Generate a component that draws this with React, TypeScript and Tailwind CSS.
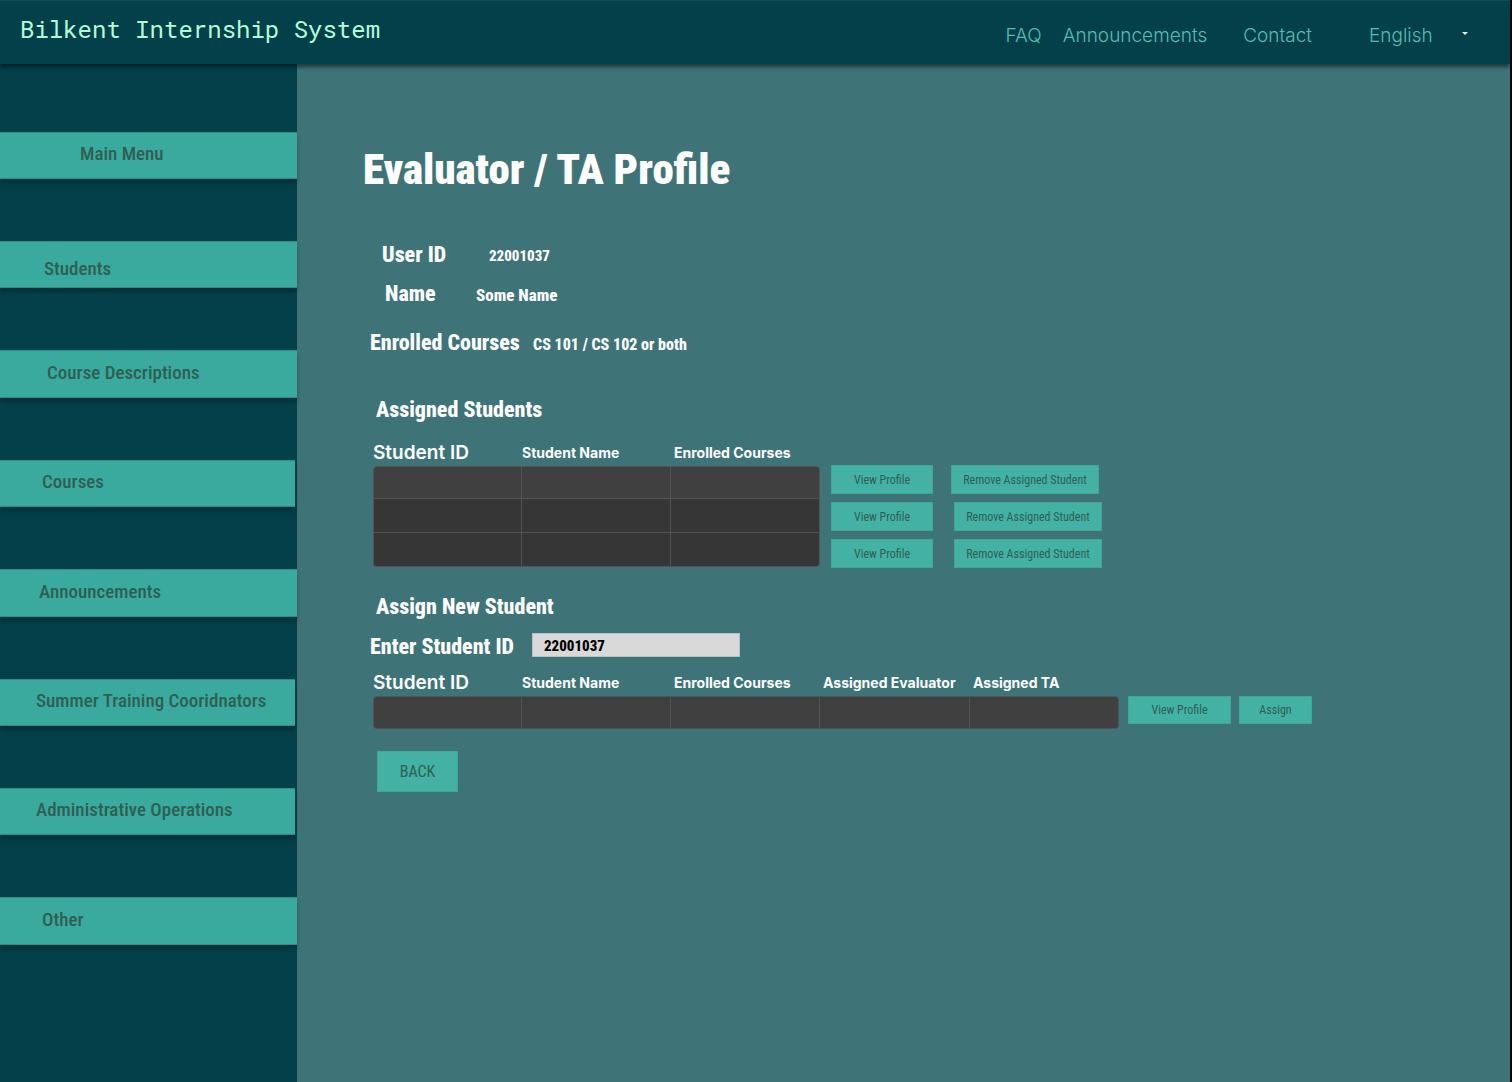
import type { ReactNode } from "react";

const display = "font-['Roboto_Condensed','Roboto',sans-serif]";

type MenuItem = { label: string; item: string };

const menu: MenuItem[] = [
  { label: "Main Menu", item: "h-[47px] w-full pl-20 pb-0.5" },
  { label: "Students", item: "h-[47px] w-full pl-11 pt-2.5" },
  { label: "Course Descriptions", item: "h-12 w-full pl-[47px] pb-0.5" },
  { label: "Courses", item: "h-[47px] mr-0.5 pl-[42px] pb-0.5" },
  { label: "Announcements", item: "h-12 w-full pl-[39px] pb-0.5" },
  { label: "Summer Training Cooridnators", item: "h-[47px] mr-0.5 pl-9 pb-0.5" },
  { label: "Administrative Operations", item: "h-[47px] mr-0.5 pl-9 pb-0.5" },
  { label: "Other", item: "h-12 w-full pl-[42px] pb-0.5" },
];

function Action({ children, className }: { children: ReactNode; className: string }) {
  return (
    <button
      type="button"
      className={`${display} shrink-0 whitespace-nowrap border border-[#3fa698] bg-[#43b1a3] text-[#2f5f53] ${className}`}
    >
      {children}
    </button>
  );
}

type Column = { label: string; head: string };

const baseColumns: Column[] = [
  { label: "Student ID", head: "w-[149px] text-[19px] font-semibold" },
  { label: "Student Name", head: "w-[149px] text-sm font-bold" },
  { label: "Enrolled Courses", head: "w-[149px] text-sm font-bold pl-[3px]" },
];

const assignColumns: Column[] = [
  ...baseColumns,
  { label: "Assigned Evaluator", head: "w-[150px] text-sm font-bold pl-[3px]" },
  { label: "Assigned TA", head: "w-[149px] text-sm font-bold pl-[3px]" },
];

function StudentTable({ columns, rows, label }: { columns: Column[]; rows: number; label: string }) {
  return (
    <table aria-label={label} className="table-fixed border-separate border-spacing-0 text-left">
      <thead>
        <tr>
          {columns.map((c) => (
            <th key={c.label} scope="col" className={`h-7 whitespace-nowrap p-0 pt-0.5 align-middle leading-6 ${c.head}`}>
              {c.label}
            </th>
          ))}
        </tr>
      </thead>
      <tbody className="[&>tr+tr>td]:h-[34px] [&>tr:first-child>td]:border-t [&>tr:first-child>td]:bg-[#404040] [&>tr:first-child>td:first-child]:rounded-tl [&>tr:first-child>td:last-child]:rounded-tr [&>tr:last-child>td:first-child]:rounded-bl [&>tr:last-child>td:last-child]:rounded-br">
        {Array.from({ length: rows }, (_, r) => (
          <tr key={r}>
            {columns.map((c) => (
              <td
                key={c.label}
                className="h-[33px] border-b border-r border-[#535353] bg-[#363636] p-0 first:border-l"
              />
            ))}
          </tr>
        ))}
      </tbody>
    </table>
  );
}

export default function App() {
  return (
    <div className="flex min-h-screen flex-col border-r-2 border-black bg-[#3e7478] font-['Inter',sans-serif] text-white">
      <header className="relative z-10 flex h-16 items-center justify-between border-t border-[#0c4c56] bg-[#04404a] pl-5 shadow-[0_3px_4px_rgba(0,0,0,0.5)]">
        <p className="whitespace-nowrap pb-2 font-['Roboto_Mono',monospace] text-2xl text-[#b1fcd6]">
          Bilkent Internship System
        </p>
        <nav className="flex items-center pr-[42px] pt-2 text-[19px] font-light text-[#57bdb0]">
          <a href="#faq" className="mr-[21px]">FAQ</a>
          <a href="#announcements" className="mr-9">Announcements</a>
          <a href="#contact" className="mr-[57px]">Contact</a>
          <div className="flex items-center">
            <select aria-label="Language" className="w-[93px] appearance-none bg-transparent">
              <option>English</option>
            </select>
            <svg aria-hidden="true" viewBox="0 0 6 3" className="mb-1.5 h-[3px] w-1.5 fill-[#e6f0f0]">
              <path d="M0 0h6L3 3z" />
            </svg>
          </div>
        </nav>
      </header>

      <div className="flex flex-1">
        <aside className="w-[297px] shrink-0 bg-[#04404a]">
          <nav className="flex flex-col gap-[62px] pb-16 pt-[68px]">
            {menu.map((m) => (
              <a
                key={m.label}
                href="#menu"
                className={`${display} flex items-center whitespace-nowrap border-y border-[#2c8d84] bg-[#3aaa9e] text-[19px] font-medium text-[#2f5f53] shadow-[0_4px_4px_rgba(0,0,0,0.25)] ${m.item}`}
              >
                {m.label}
              </a>
            ))}
          </nav>
        </aside>

        <main className="min-w-0 flex-1 pl-[76px] pt-[75px]">
          <h1 className={`${display} -ml-2.5 text-[43px] font-black leading-[60px]`}>Evaluator / TA Profile</h1>

          <dl className={`${display} whitespace-nowrap pt-9 font-extrabold`}>
            <div className="flex h-[39px] items-center">
              <dt className="w-[116px] pl-[9px] text-[22px]">User ID</dt>
              <dd className="pt-1 text-[15px]">22001037</dd>
            </div>
            <div className="flex h-[39px] items-center">
              <dt className="w-[103px] pl-3 text-[22px]">Name</dt>
              <dd className="pt-1 text-[17px]">Some Name</dd>
            </div>
            <div className="mt-2.5 flex h-[39px] items-center">
              <dt className="-ml-[3px] w-[163px] text-[22px]">Enrolled Courses</dt>
              <dd className="pt-1 text-base">CS 101 / CS 102 or both</dd>
            </div>
          </dl>

          <section className="pt-7">
            <h2 className={`${display} pl-[3px] text-[22px] font-extrabold leading-10`}>Assigned Students</h2>
            <div className="flex items-start pt-2">
              <StudentTable columns={baseColumns} rows={3} label="Assigned Students" />
              <div className="flex flex-col gap-2 pl-[11px] pt-[27px]">
                <div className="flex gap-[18px]">
                  <Action className="h-[29px] w-[102px] text-xs">View Profile</Action>
                  <Action className="h-[29px] w-[148px] text-xs">Remove Assigned Student</Action>
                </div>
                <div className="flex gap-[21px]">
                  <Action className="h-[29px] w-[102px] text-xs">View Profile</Action>
                  <Action className="h-[29px] w-[148px] text-xs">Remove Assigned Student</Action>
                </div>
                <div className="flex gap-[21px]">
                  <Action className="h-[29px] w-[102px] text-xs">View Profile</Action>
                  <Action className="h-[29px] w-[148px] text-xs">Remove Assigned Student</Action>
                </div>
              </div>
            </div>
          </section>

          <section className="pt-[19px]">
            <h2 className={`${display} pl-[3px] text-[22px] font-extrabold leading-10`}>Assign New Student</h2>
            <div className="flex h-9 items-center">
              <label
                htmlFor="student-id"
                className={`${display} -ml-[3px] w-[162px] whitespace-nowrap pt-0.5 text-[22px] font-extrabold`}
              >
                Enter Student ID
              </label>
              <input
                id="student-id"
                defaultValue="22001037"
                className={`${display} h-6 w-[208px] border border-[#b5c1c2] bg-[#d9d9d9] px-[11px] pt-0.5 text-[15px] font-extrabold text-black`}
              />
            </div>
            <div className="flex items-start pt-[5px]">
              <StudentTable columns={assignColumns} rows={1} label="Assign New Student" />
              <div className="flex gap-2 pl-[9px] pt-7">
                <Action className="h-7 w-[103px] text-xs">View Profile</Action>
                <Action className="h-7 w-[73px] text-xs">Assign</Action>
              </div>
            </div>
          </section>

          <div className="pl-1 pt-[22px]">
            <Action className="h-[41px] w-[81px] text-base">BACK</Action>
          </div>
        </main>
      </div>
    </div>
  );
}
